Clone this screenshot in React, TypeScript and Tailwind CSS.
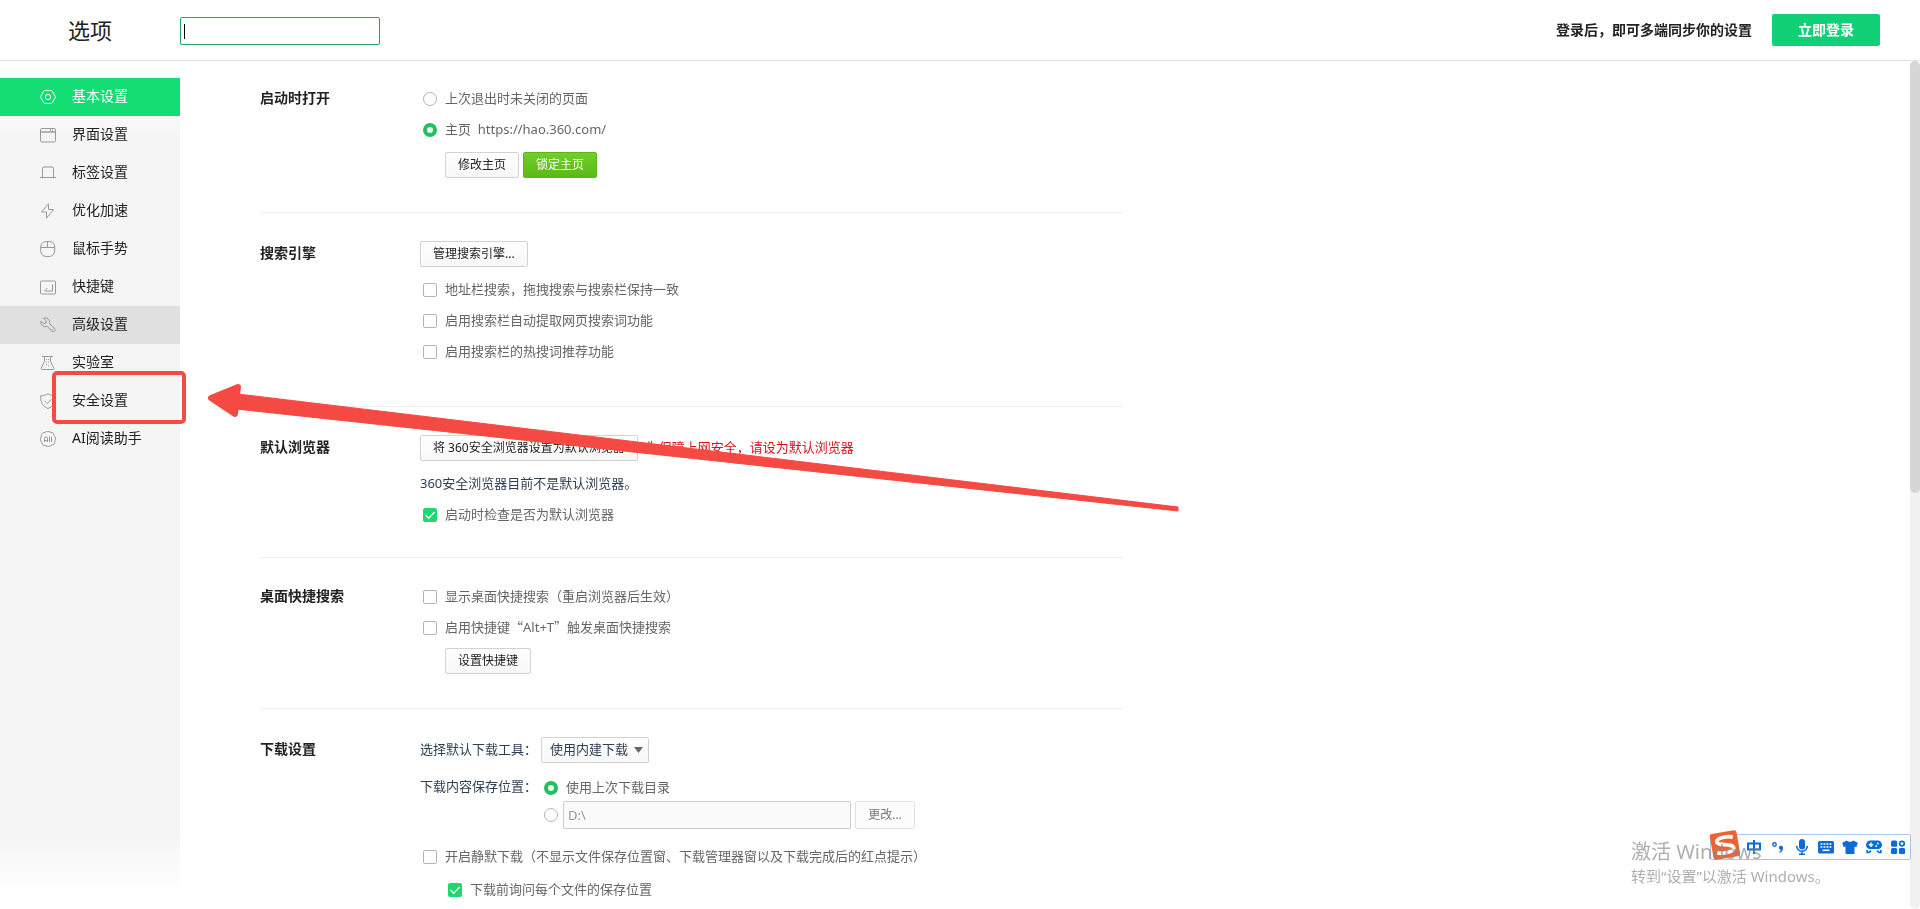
import React, { useState } from "react";

const FONT = "font-['Noto_Sans','Noto_Sans_CJK_SC',sans-serif]";

function Svg({ children }: { children: React.ReactNode }) {
  return (
    <svg viewBox="0 0 16 16" className="size-4 shrink-0" fill="none" stroke="currentColor" strokeWidth="1" aria-hidden="true">
      {children}
    </svg>
  );
}

const navItems: { label: string; icon: React.ReactNode }[] = [
  {
    label: "基本设置",
    icon: (
      <Svg>
        <path d="M5 1.5h6a1.5 1.5 0 0 1 1.3.7l2.9 5a1.5 1.5 0 0 1 0 1.500l-2.900 5a1.500 1.500 0 0 1-1.300.8H5a1.500 1.500 0 0 1-1.300-.8l-2.900-5a1.500 1.500 0 0 1 0-1.500l2.900-5A1.500 1.500 0 0 1 5 1.500z" />
        <circle cx="8" cy="8" r="2.700" />
      </Svg>
    ),
  },
  {
    label: "界面设置",
    icon: (
      <Svg>
        <rect x=".5" y="1.500" width="15" height="13.500" rx="1.500" />
        <path d="M.5 5.500h15M.5 4.500h15" opacity=".7" />
        <path d="M10.500 2v3M12.500 2v3" opacity=".7" />
      </Svg>
    ),
  },
  {
    label: "标签设置",
    icon: (
      <Svg>
        <path d="M0 12.500h16M2.500 12.500V3.500a1.500 1.500 0 0 1 1.500-1.500h8A1.500 1.500 0 0 1 13.500 3.500v9" />
      </Svg>
    ),
  },
  {
    label: "优化加速",
    icon: (
      <Svg>
        <path d="M8.500.8 1.500 9H6.500v6.200L13.500 6.500H8.500z" strokeLinejoin="round" />
      </Svg>
    ),
  },
  {
    label: "鼠标手势",
    icon: (
      <Svg>
        <rect x=".7" y=".5" width="14" height="15" rx="5.500" />
        <path d="M.7 6.500h14M7.500.5v6" />
      </Svg>
    ),
  },
  {
    label: "快捷键",
    icon: (
      <Svg>
        <rect x=".5" y="2" width="15" height="13" rx="1" />
        <path d="M12.500 5.500v6.500H5M7.500 9l-3 3" />
      </Svg>
    ),
  },
  {
    label: "高级设置",
    icon: (
      <Svg>
        <path
          d="M3.600 1.200A4.500 4.500 0 0 1 9.600 6.600l4.900 4.600a2 2 0 0 1-2.800 2.900L7.200 9.200A4.500 4.500 0 0 1 .8 4.200l2.600 2.600 2.300-.6.500-2.300z"
          strokeLinejoin="round"
        />
        <path d="M11.500 11.800l1.200 1.200" />
      </Svg>
    ),
  },
  {
    label: "实验室",
    icon: (
      <Svg>
        <path d="M2 1.500h11M4.500 1.500v4.800L1.200 13.300a.8.8 0 0 0 .7 1.200h11.200a.8.800 0 0 0 .7-1.200L10.500 6.300V1.500" />
        <path d="M6.500 4v1M8.500 4v1M6.500 6.500v1M8.500 6.500v1M6.500 9v1M8.500 10v1" />
      </Svg>
    ),
  },
  {
    label: "安全设置",
    icon: (
      <Svg>
        <path d="M8 .7c2 1.500 4.500 2 7.300 2 .3 6-1.500 10.500-7.300 12.800C2.200 13.200.4 8.700.7 2.700 3.500 2.700 6 2.200 8 .7z" strokeLinejoin="round" />
        <path d="m4.500 7.800 2.700 2.700 4.300-4.300" />
      </Svg>
    ),
  },
  {
    label: "AI阅读助手",
    icon: (
      <Svg>
        <path d="M5 1.300a4.500 4.500 0 0 1 5-.3 4 4 0 0 1 4.200 3.500 4.200 4.200 0 0 1 .6 5.500 4 4 0 0 1-3.600 4.300 4.500 4.500 0 0 1-5.200.7A4 4 0 0 1 1.800 11.500 4.200 4.200 0 0 1 1.200 6 4 4 0 0 1 5 1.300z" />
        <path d="M4.500 11V7.500a1.500 1.500 0 0 1 3 0V11M4.500 9.500h3M9.500 5.500V11M11.500 5.500V11" />
      </Svg>
    ),
  },
];

const boxBase = "size-[14px] shrink-0 appearance-none border border-[#b4b4b4] bg-white";

function Check({ label, defaultChecked = false }: { label: React.ReactNode; defaultChecked?: boolean }) {
  return (
    <label className="flex h-[22px] items-center gap-2 pl-[3px] text-[13px] leading-5 text-[#666]">
      <span className="grid place-items-center">
        <input
          type="checkbox"
          defaultChecked={defaultChecked}
          className={`${boxBase} peer col-start-1 row-start-1 rounded-[2px] checked:border-[#1ed76d] checked:bg-[#1ed76d]`}
        />
        <svg
          viewBox="0 0 14 14"
          className="pointer-events-none invisible col-start-1 row-start-1 size-[14px] peer-checked:visible"
          fill="none"
          stroke="#fff"
          strokeWidth="1.3"
          aria-hidden="true"
        >
          <path d="m2.500 7 3.200 3.200L11.700 4" />
        </svg>
      </span>
      <span className="pb-[2px]">{label}</span>
    </label>
  );
}

const radioClass = `${boxBase} rounded-full checked:border-4 checked:border-[#20bf62] checked:bg-[#eafff2]`;

function Radio({ name, label, defaultChecked = false }: { name: string; label: string; defaultChecked?: boolean }) {
  return (
    <label className="flex h-[22px] items-center gap-2 pl-[3px] text-[13px] leading-5 text-[#666]">
      <input type="radio" name={name} defaultChecked={defaultChecked} className={radioClass} />
      <span className="pb-[2px] whitespace-pre">{label}</span>
    </label>
  );
}

function Button({ children, tone = "plain" }: { children: React.ReactNode; tone?: "plain" | "green" }) {
  const colors =
    tone === "green"
      ? "border-[#5cb31a] bg-linear-to-b from-[#71cf2c] to-[#5bb915] text-white"
      : "border-[#d2d2d2] bg-linear-to-b from-white to-[#f7f7f7] text-[#222]";
  return (
    <button type="button" className={`h-[26px] rounded-[2px] border px-3 text-xs whitespace-nowrap ${colors}`}>
      {children}
    </button>
  );
}

function Section({
  title,
  pad,
  tall = false,
  last = false,
  children,
}: {
  title: string;
  pad: string;
  tall?: boolean;
  last?: boolean;
  children: React.ReactNode;
}) {
  return (
    <section className={`flex ${pad} ${last ? "" : "border-b border-[#efefef]"}`}>
      <h2 className={`w-40 shrink-0 text-sm font-bold text-[#222] ${tall ? "leading-6" : "leading-5"}`}>{title}</h2>
      <div className="min-w-0 flex-1">{children}</div>
    </section>
  );
}

function ImeBar() {
  return (
    <div className="absolute right-[9px] bottom-[49px] flex h-[26px] items-center rounded-[2px] border border-[#a9c4e4] bg-white pr-1 pl-[35px]">
      <svg viewBox="0 0 32 32" className="absolute -top-[6px] -left-[2px] size-8" aria-hidden="true">
        <g transform="rotate(-10 16 16)">
          <rect x="2.500" y="3" width="27" height="26" rx="2.500" fill="#f0622d" />
          <path
            d="M25 9.500C20 7.500 9 7.500 8.500 11.500S24 15.500 24 20s-11 4.500-17 2.500"
            fill="none"
            stroke="#fff"
            strokeWidth="3.800"
          />
        </g>
      </svg>
      <div className="flex items-center gap-2 text-[#0b6bd8]">
        <svg viewBox="0 0 16 16" className="size-4" fill="none" stroke="currentColor" strokeWidth="2" aria-hidden="true">
          <path d="M2 4.500h12v6H2zM8 1v14" />
        </svg>
        <svg viewBox="0 0 16 16" className="size-4" aria-hidden="true">
          <circle cx="4.500" cy="5.500" r="1.700" fill="none" stroke="currentColor" strokeWidth="1.400" />
          <path d="M9 8.500a2 2 0 0 1 4 .3c0 2.500-1 4.200-3.200 5.200l-.6-.9c1-.6 1.500-1.300 1.600-2.300A2 2 0 0 1 9 8.500z" fill="currentColor" />
        </svg>
        <svg viewBox="0 0 16 16" className="size-4" aria-hidden="true">
          <rect x="5" y="0" width="6" height="10.500" rx="3" fill="currentColor" />
          <path d="M2.700 7a5.300 5.300 0 0 0 10.600 0M8 12.500V15M5 15.200h6" fill="none" stroke="currentColor" strokeWidth="1.600" />
        </svg>
        <svg viewBox="0 0 16 16" className="size-4" aria-hidden="true">
          <rect x="0" y="2" width="16" height="12.500" rx="1.500" fill="currentColor" />
          <path d="M2.500 5h11M2.500 8h11" stroke="#fff" strokeWidth="1.600" strokeDasharray="1.900 1.100" />
          <path d="M4.500 11.300h7" stroke="#fff" strokeWidth="1.600" />
        </svg>
        <svg viewBox="0 0 16 16" className="size-4" fill="currentColor" aria-hidden="true">
          <path d="M5 1.500c1 1.700 5 1.700 6 0l4.800 2.300-1.500 4.400-1.800-.6V14a1 1 0 0 1-1 1h-7a1 1 0 0 1-1-1V7.600l-1.800.6L.2 3.800z" />
        </svg>
        <svg viewBox="0 0 16 16" className="size-4" aria-hidden="true">
          <path
            d="M4.500 1.500h7A4.300 4.300 0 0 1 16 5.800c0 2.600-1.600 4.200-4 4.200H4C1.600 10 0 8.400 0 5.800a4.300 4.300 0 0 1 4.500-4.300z"
            fill="currentColor"
          />
          <path d="M5 3.500v4.400M2.800 5.700h4.400" stroke="#fff" strokeWidth="1.400" />
          <circle cx="11.800" cy="4.500" r=".9" fill="#fff" />
          <circle cx="10.200" cy="7" r=".9" fill="#fff" />
          <path d="M1.200 11v2.500h2l1.800-2M14.800 11v2.500h-2l-1.800-2" fill="none" stroke="currentColor" strokeWidth="1.700" />
        </svg>
        <svg viewBox="0 0 16 16" className="size-4" fill="currentColor" aria-hidden="true">
          <rect x="1" y="1.500" width="6.200" height="6.200" rx="1.500" />
          <circle cx="12" cy="4.600" r="2.300" fill="none" stroke="currentColor" strokeWidth="1.700" />
          <rect x="1" y="8.900" width="6.200" height="6.200" rx="1.500" />
          <rect x="8.900" y="8.900" width="6.200" height="6.200" rx="1.500" />
        </svg>
      </div>
    </div>
  );
}

export default function App() {
  const [active, setActive] = useState(0);
  return (
    <div className={`relative flex h-screen flex-col overflow-hidden bg-white text-[13px] text-[#333] ${FONT}`}>
      <header className="flex h-[61px] shrink-0 items-center border-b border-[#e4e4e4] pr-10">
        <h1 className="w-[180px] shrink-0 pl-[68px] text-[22px] text-[#222]">选项</h1>
        <div className="mt-[2px] grid items-center">
          <input
            type="text"
            aria-label="搜索设置"
            autoFocus
            className="peer col-start-1 row-start-1 h-7 w-[200px] rounded-[2px] border border-[#25a567] px-1 text-[13px] caret-transparent outline-none"
          />
          <span className="pointer-events-none invisible col-start-1 row-start-1 ml-1 h-[15px] w-px bg-black peer-focus:visible" />
        </div>
        <p className="ml-auto text-sm font-bold text-[#222]">登录后，即可多端同步你的设置</p>
        <button type="button" className="ml-5 h-8 w-[108px] rounded-[2px] bg-[#11d076] text-sm font-bold text-white">
          立即登录
        </button>
      </header>

      <div className="flex min-h-0 flex-1">
        <nav className="w-[180px] shrink-0 bg-[linear-gradient(to_bottom,#fff_0,#f5f5f5_80px,#f5f5f5_calc(100%-75px),#fff_calc(100%-15px))] pt-[17px]">
          <ul className="text-sm">
            {navItems.map((item, i) => (
              <li key={item.label}>
                <a
                  href="#"
                  onClick={() => setActive(i)}
                  className={`flex h-[38px] items-center gap-4 pl-10 ${
                    i === active ? "bg-[#14dd74] text-white" : i === 6 ? "bg-[#e0e0e0] text-[#999]" : "text-[#999]"
                  }`}
                >
                  {item.icon}
                  <span className={`pb-[2px] ${i === active ? "text-white" : "text-[#222]"}`}>{item.label}</span>
                </a>
              </li>
            ))}
          </ul>
        </nav>

        <main className="min-w-0 flex-1 overflow-hidden pl-20">
          <div className="max-w-[863px]">
            <Section title="启动时打开" pad="pt-[27px] pb-[34px]">
              <div className="flex flex-col gap-[9px]">
                <Radio name="startup" label="上次退出时未关闭的页面" />
                <Radio name="startup" label={"主页  https://hao.360.com/"} defaultChecked />
              </div>
              <div className="mt-[11px] flex gap-1 pl-[25px]">
                <Button>修改主页</Button>
                <Button tone="green">锁定主页</Button>
              </div>
            </Section>

            <Section title="搜索引擎" pad="pt-7 pb-[43px]" tall>
              <div className="flex">
                <Button>管理搜索引擎...</Button>
              </div>
              <div className="mt-3 flex flex-col gap-[9px]">
                <Check label="地址栏搜索，拖拽搜索与搜索栏保持一致" />
                <Check label="启用搜索栏自动提取网页搜索词功能" />
                <Check label="启用搜索栏的热搜词推荐功能" />
              </div>
            </Section>

            <Section title="默认浏览器" pad="pt-7 pb-[31px]" tall>
              <div className="flex h-[26px] items-center gap-2">
                <Button>将 360安全浏览器设置为默认浏览器</Button>
                <span className="text-[#d9121b]">为保障上网安全，请设为默认浏览器</span>
              </div>
              <p className="mt-3 h-[22px] leading-5 text-[#2f3f52]">360安全浏览器目前不是默认浏览器。</p>
              <div className="mt-[9px]">
                <Check label="启动时检查是否为默认浏览器" defaultChecked />
              </div>
            </Section>

            <Section title="桌面快捷搜索" pad="pt-7 pb-[34px]">
              <div className="flex flex-col gap-[9px]">
                <Check label="显示桌面快捷搜索（重启浏览器后生效）" />
                <Check
                  label={
                    <>
                      启用快捷键<span className="font-['Noto_Sans_CJK_SC',sans-serif]">“</span>Alt+T
                      <span className="font-['Noto_Sans_CJK_SC',sans-serif]">”</span>触发桌面快捷搜索
                    </>
                  }
                />
              </div>
              <div className="mt-[9px] flex pl-[25px]">
                <Button>设置快捷键</Button>
              </div>
            </Section>

            <Section title="下载设置" pad="pt-7 pb-[34px]" tall last>
              <div className="flex h-[26px] items-center text-[#2f3f52]">
                <label htmlFor="tool" className="w-[121px] shrink-0 pb-[2px] leading-5">
                  选择默认下载工具：
                </label>
                <span className="grid items-center">
                  <select
                    id="tool"
                    className="col-start-1 row-start-1 h-[26px] w-[108px] appearance-none rounded-[2px] border border-[#d2d2d2] bg-linear-to-b from-white to-[#f7f7f7] pr-5 pl-2 text-[13px]"
                  >
                    <option>使用内建下载</option>
                  </select>
                  <svg
                    viewBox="0 0 9 6"
                    className="pointer-events-none col-start-1 row-start-1 mr-[6px] h-[6px] w-[9px] justify-self-end"
                    fill="#666"
                    aria-hidden="true"
                  >
                    <path d="M0 0h9L4.500 6z" />
                  </svg>
                </span>
              </div>
              <div className="mt-[14px] flex">
                <p className="w-[121px] shrink-0 leading-[18px] text-[#2f3f52]">下载内容保存位置：</p>
                <div>
                  <Radio name="dir" label="使用上次下载目录" defaultChecked />
                  <div className="mt-[2px] flex items-center pl-[3px]">
                    <input type="radio" name="dir" aria-label="自定义下载目录" className={radioClass} />
                    <input
                      type="text"
                      disabled
                      defaultValue={"D:\\"}
                      aria-label="下载目录"
                      className="ml-[5px] h-7 w-[288px] rounded-[2px] border border-[#ccc] bg-[#fafafa] px-1 text-[13px] text-[#999]"
                    />
                    <button
                      type="button"
                      disabled
                      className="ml-1 h-7 w-[60px] rounded-[2px] border border-[#e2e2e2] bg-[#fcfcfc] text-xs text-[#777]"
                    >
                      更改...
                    </button>
                  </div>
                </div>
              </div>
              <div className="mt-[17px] flex flex-col gap-[11px]">
                <Check label="开启静默下载（不显示文件保存位置窗、下载管理器窗以及下载完成后的红点提示）" />
                <div className="pl-[25px]">
                  <Check label="下载前询问每个文件的保存位置" defaultChecked />
                </div>
              </div>
            </Section>
          </div>
        </main>

        <div className="w-[10px] shrink-0 rounded-full bg-[#f1f1f1]">
          <div className="h-[51%] rounded-full bg-[#d6d6d6]" />
        </div>
      </div>

      <div className="absolute top-[371px] left-[52px] h-[53px] w-[134px] rounded-[5px] border-4 border-[#f24c46]" />
      <svg
        viewBox="0 0 980 140"
        className="pointer-events-none absolute top-[380px] left-[200px] h-[140px] w-[980px]"
        fill="#f44a43"
        stroke="#f44a43"
        strokeLinejoin="round"
        aria-hidden="true"
      >
        <path d="M11 18 38 7 35 34z" strokeWidth="6" />
        <path d="M38 14 978 127V131L36 29z" strokeWidth="1" />
      </svg>

      <ImeBar />
      <div className="pointer-events-none absolute bottom-[22px] left-[1631px] text-[#8c8c8c]/70">
        <p className="text-[20px] leading-[26px]">激活 Windows</p>
        <p className="text-[15px] leading-[22px]">转到“设置”以激活 Windows。</p>
      </div>
    </div>
  );
}
